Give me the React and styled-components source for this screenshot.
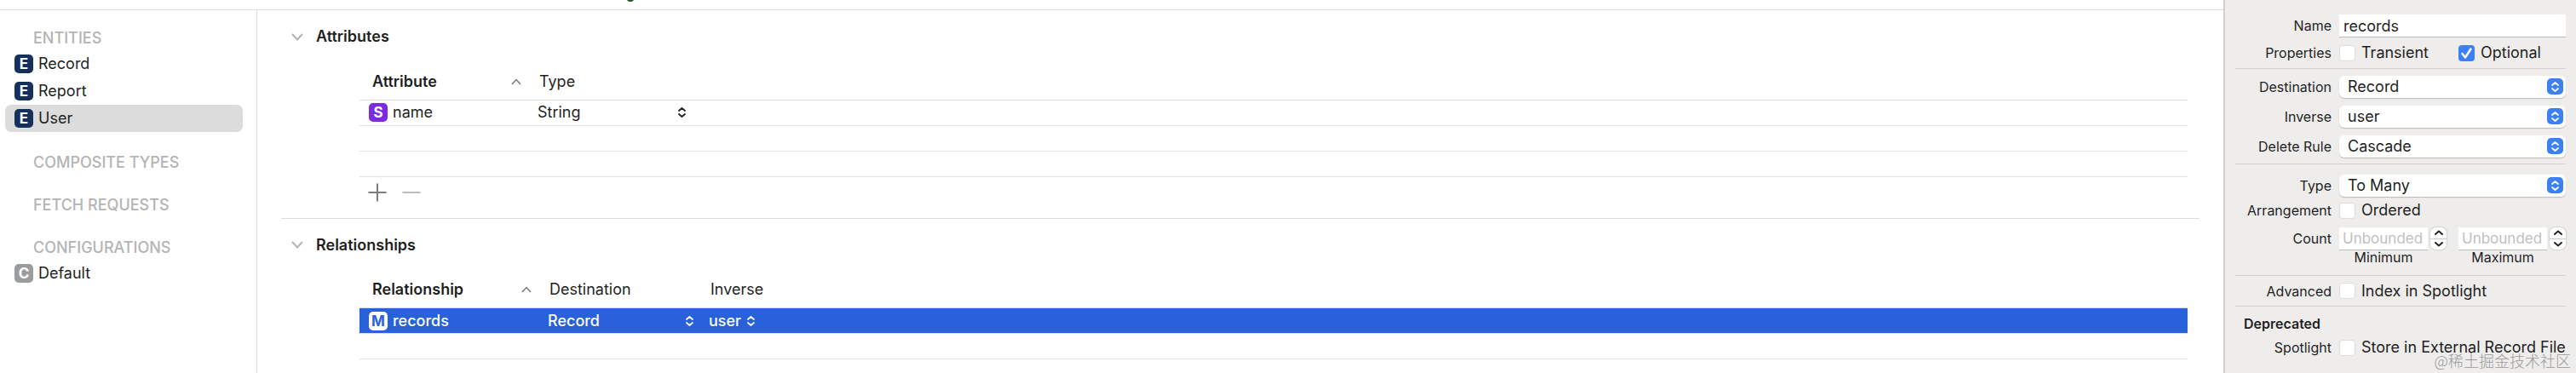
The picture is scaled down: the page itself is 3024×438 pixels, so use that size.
import styled, { createGlobalStyle, css } from "styled-components";

const entities = ["Record", "Report", "User"];

const App = () => {
    return (
        <Page>
            <GlobalStyle />
            <Editor>
                <TopBar>
                    <StatusMark viewBox="0 0 8 2">
                        <path d="M0 0H8C7 1.4 5.6 2 4 2S1 1.4 0 0Z" fill="#245a22" />
                    </StatusMark>
                </TopBar>
                <Panes>
                    <Sidebar>
                        <Group>
                            <GroupTitle>ENTITIES</GroupTitle>
                            {entities.map(name => (
                                <SideItem key={name} $selected={name === "User"}>
                                    <Badge $color="#14305c">E</Badge>
                                    {name}
                                </SideItem>
                            ))}
                        </Group>
                        <Group>
                            <GroupTitle>COMPOSITE TYPES</GroupTitle>
                        </Group>
                        <Group>
                            <GroupTitle>FETCH REQUESTS</GroupTitle>
                        </Group>
                        <Group>
                            <GroupTitle>CONFIGURATIONS</GroupTitle>
                            <SideItem>
                                <Badge $color="#9b9c9d">C</Badge>
                                Default
                            </SideItem>
                        </Group>
                    </Sidebar>
                    <Main>
                        <Section>
                            <SectionTitle>
                                <Disclosure />
                                Attributes
                            </SectionTitle>
                            <Table>
                                <colgroup>
                                    <col width="202" />
                                    <col width="192" />
                                    <col />
                                </colgroup>
                                <thead>
                                    <tr>
                                        <HeadCell $sorted>
                                            <HeadLabel>Attribute <SortArrow /></HeadLabel>
                                        </HeadCell>
                                        <HeadCell>Type</HeadCell>
                                        <HeadCell />
                                    </tr>
                                </thead>
                                <tbody>
                                    <Row>
                                        <Cell>
                                            <NameBox>
                                                <Badge $color="#7d2ae0">S</Badge>
                                                name
                                            </NameBox>
                                        </Cell>
                                        <Cell>
                                            <CellPopup label="Attribute type" value="String" />
                                        </Cell>
                                        <Cell />
                                    </Row>
                                    <Row><Cell /><Cell /><Cell /></Row>
                                    <Row><Cell /><Cell /><Cell /></Row>
                                </tbody>
                            </Table>
                            <TableActions>
                                <IconButton type="button" aria-label="Add attribute">
                                    <svg width="22" height="22" viewBox="0 0 22 22">
                                        <path d="M0.5 11H21.5M11 0.5V21.5" stroke="#7d7d7d" strokeWidth="2" />
                                    </svg>
                                </IconButton>
                                <IconButton type="button" aria-label="Remove attribute">
                                    <svg width="22" height="22" viewBox="0 0 22 22">
                                        <path d="M0.5 11H21.5" stroke="#bdbdbd" strokeWidth="2" />
                                    </svg>
                                </IconButton>
                            </TableActions>
                        </Section>
                        <Section>
                            <SectionTitle>
                                <Disclosure />
                                Relationships
                            </SectionTitle>
                            <Table>
                                <colgroup>
                                    <col width="214" />
                                    <col width="189" />
                                    <col />
                                </colgroup>
                                <thead>
                                    <tr>
                                        <HeadCell $sorted>
                                            <HeadLabel>Relationship <SortArrow /></HeadLabel>
                                        </HeadCell>
                                        <HeadCell>Destination</HeadCell>
                                        <HeadCell>Inverse</HeadCell>
                                    </tr>
                                </thead>
                                <tbody>
                                    <Row $selected>
                                        <Cell>
                                            <NameBox>
                                                <Badge $color="#fff" $text="#2861d9">M</Badge>
                                                records
                                            </NameBox>
                                        </Cell>
                                        <Cell>
                                            <CellPopup label="Destination entity" value="Record" />
                                        </Cell>
                                        <Cell>
                                            <CellPopup label="Inverse relationship" value="user" compact />
                                        </Cell>
                                    </Row>
                                    <Row><Cell /><Cell /><Cell /></Row>
                                </tbody>
                            </Table>
                        </Section>
                    </Main>
                </Panes>
            </Editor>
            <Inspector>
                <Block $top={4}>
                    <Field $height={28}>
                        <FieldLabel htmlFor="name">Name</FieldLabel>
                        <TextInput id="name" defaultValue="records" />
                    </Field>
                    <Field $height={36}>
                        <FieldLabel as="span">Properties</FieldLabel>
                        <Pair>
                            <Check label="Transient" />
                            <Check label="Optional" checked />
                        </Pair>
                    </Field>
                </Block>
                <Block $top={3} $bottom={3}>
                    <PopupField id="destination" label="Destination" value="Record" />
                    <PopupField id="inverse" label="Inverse" value="user" />
                    <PopupField id="rule" label="Delete Rule" value="Cascade" />
                </Block>
                <Block $top={7} $bottom={12}>
                    <PopupField id="type" label="Type" value="To Many" />
                    <Field $height={22}>
                        <FieldLabel as="span">Arrangement</FieldLabel>
                        <Check label="Ordered" />
                    </Field>
                    <CountField>
                        <FieldLabel as="span">Count</FieldLabel>
                        <Pair>
                            <Counter id="min" />
                            <Counter id="max" />
                        </Pair>
                    </CountField>
                    <Field $height={18}>
                        <span />
                        <Pair>
                            <CountLabel htmlFor="min">Minimum</CountLabel>
                            <CountLabel htmlFor="max">Maximum</CountLabel>
                        </Pair>
                    </Field>
                </Block>
                <Block>
                    <Field $height={35}>
                        <FieldLabel as="span">Advanced</FieldLabel>
                        <Check label="Index in Spotlight" />
                    </Field>
                </Block>
                <Block $top={8}>
                    <BlockTitle>Deprecated</BlockTitle>
                    <Field $height={32}>
                        <FieldLabel as="span">Spotlight</FieldLabel>
                        <Check label="Store in External Record File" />
                    </Field>
                </Block>
                <Watermark>@稀土掘金技术社区</Watermark>
            </Inspector>
        </Page>
    );
}

export default App;

const Disclosure = () => (
    <svg width="14" height="9" viewBox="0 0 14 9">
        <path d="M1 1L7 7.5L13 1" fill="none" stroke="#b4b4b4" strokeWidth="2" />
    </svg>
);

const SortArrow = () => (
    <svg width="12" height="8" viewBox="0 0 12 8">
        <path d="M1 7L6 1.5L11 7" fill="none" stroke="#777" strokeWidth="1.5" />
    </svg>
);

const UpDown = () => (
    <svg width="9" height="12" viewBox="0 0 9 12">
        <path d="M1 4L4.5 1L8 4M1 8L4.5 11L8 8" fill="none" stroke="currentColor" strokeWidth="1.8" strokeLinecap="round" strokeLinejoin="round" />
    </svg>
);

const CellPopup = ({ label, value, compact }) => (
    <CellPopupBox $compact={compact}>
        <CellSelect aria-label={label} defaultValue={value}>
            <option>{value}</option>
        </CellSelect>
        <UpDown />
    </CellPopupBox>
);

const PopupField = ({ id, label, value }) => (
    <Field $height={35}>
        <FieldLabel htmlFor={id}>{label}</FieldLabel>
        <PopupBox>
            <PopupSelect id={id} defaultValue={value}>
                <option>{value}</option>
            </PopupSelect>
            <PopupCap>
                <UpDown />
            </PopupCap>
        </PopupBox>
    </Field>
);

const Check = ({ label, checked }) => (
    <CheckLabel>
        <CheckBox type="checkbox" defaultChecked={checked} />
        {checked && (
            <Tick viewBox="0 0 19 19">
                <path d="M4.5 10L8 14.5L14.5 4.5" fill="none" stroke="#fff" strokeWidth="2.5" strokeLinecap="round" strokeLinejoin="round" />
            </Tick>
        )}
        {label}
    </CheckLabel>
);

const Counter = ({ id }) => (
    <CounterBox>
        <CountInput id={id} placeholder="Unbounded" />
        <Stepper>
            <StepButton type="button" aria-label="Increase">
                <svg width="10" height="6" viewBox="0 0 10 6">
                    <path d="M1 5L5 1.5L9 5" fill="none" stroke="#222" strokeWidth="2" strokeLinecap="round" />
                </svg>
            </StepButton>
            <StepButton type="button" aria-label="Decrease">
                <svg width="10" height="6" viewBox="0 0 10 6">
                    <path d="M1 1L5 4.5L9 1" fill="none" stroke="#222" strokeWidth="2" strokeLinecap="round" />
                </svg>
            </StepButton>
        </Stepper>
    </CounterBox>
);

const GlobalStyle = createGlobalStyle`
    * {
        box-sizing: border-box;
    }
    body {
        margin: 0;
        background: #fff;
        color: #1f1f1f;
        font-family: Inter, "Noto Sans CJK SC", sans-serif;
        font-size: 18px;
        line-height: 24px;
    }
    svg {
        display: block;
        flex: none;
    }
    input, select, button {
        margin: 0;
        font: inherit;
        color: inherit;
        border: 0;
        outline: none;
    }
`;

const Page = styled.div`
    display: flex;
    min-height: 100vh;
    overflow: hidden;
`;
const Editor = styled.div`
    flex: 1;
    min-width: 0;
    display: flex;
    flex-direction: column;
`;
const TopBar = styled.header`
    height: 12px;
    padding-left: 736px;
    border-bottom: 1px solid #dedede;
`;
const StatusMark = styled.svg`
    width: 8px;
    height: 2px;
`;
const Panes = styled.div`
    flex: 1;
    display: flex;
`;

const Sidebar = styled.nav`
    width: 302px;
    padding: 19px 16px 0 6px;
    border-right: 1px solid #dcdcdc;
`;
const Group = styled.div`
    margin-bottom: 22px;
`;
const GroupTitle = styled.div`
    padding-left: 33px;
    line-height: 28px;
    font-weight: 500;
    color: #b4b4b4;
`;
const SideItem = styled.div`
    display: flex;
    align-items: center;
    gap: 6px;
    height: 32px;
    padding-left: 11px;
    border-radius: 7px;
    background: ${({ $selected }) => ($selected ? "#dcdcdc" : "transparent")};
`;
const Badge = styled.span`
    flex: none;
    width: 22px;
    height: 22px;
    border-radius: 5px;
    background: ${({ $color }) => $color};
    color: ${({ $text }) => $text || "#fff"};
    font-size: 17px;
    font-weight: 700;
    line-height: 22px;
    text-align: center;
`;

const Main = styled.main`
    flex: 1;
    min-width: 0;
    padding: 0 28px;
`;
const Section = styled.section`
    padding: 19px 14px 19px 12px;
    & + & {
        border-top: 1px solid #dedede;
    }
`;
const SectionTitle = styled.h2`
    display: flex;
    align-items: center;
    gap: 15px;
    margin: 0 0 24px;
    font-size: 18px;
    font-weight: 600;
    line-height: 24px;
`;
const Table = styled.table`
    width: calc(100% - 80px);
    margin-left: 80px;
    table-layout: fixed;
    border-collapse: collapse;
`;
const HeadCell = styled.th`
    height: 38px;
    padding: ${({ $sorted }) => ($sorted ? "0 12px 4px 15px" : "0 9px 4px")};
    text-align: left;
    font-weight: ${({ $sorted }) => ($sorted ? 600 : 400)};
    border-bottom: 1px solid #dedede;
`;
const HeadLabel = styled.div`
    display: flex;
    align-items: center;
    justify-content: space-between;
`;
const Row = styled.tr`
    ${({ $selected }) => $selected && css`
        background: #2861d9;
        color: #fff;
        font-weight: 500;
    `}
`;
const Cell = styled.td`
    height: 30px;
    padding: 0 11px 0 7px;
    border-bottom: 1px solid #e2e2e2;
    &:first-child {
        padding-left: 11px;
    }
`;
const NameBox = styled.div`
    display: flex;
    align-items: center;
    gap: 6px;
`;
const CellPopupBox = styled.div`
    display: flex;
    align-items: center;
    justify-content: ${({ $compact }) => ($compact ? "flex-start" : "space-between")};
    gap: 6px;
`;
const CellSelect = styled.select`
    appearance: none;
    padding: 0;
    background: none;
    font-weight: inherit;
`;
const TableActions = styled.div`
    display: flex;
    gap: 18px;
    padding: 7px 0 0 90px;
`;
const IconButton = styled.button`
    padding: 0;
    background: none;
`;

const Inspector = styled.aside`
    position: relative;
    width: 414px;
    padding: 12px 12px 0 12px;
    border-left: 2px solid #d2d1d0;
    background: #eeedec;
`;
const Block = styled.div`
    padding-top: ${({ $top }) => $top || 0}px;
    padding-bottom: ${({ $bottom }) => $bottom || 0}px;
    & + & {
        border-top: 1px solid #d2d1d0;
    }
`;
const Field = styled.div`
    display: grid;
    grid-template-columns: 113px minmax(0, 1fr);
    column-gap: 9px;
    align-items: center;
    height: ${({ $height }) => $height}px;
`;
const CountField = styled(Field)`
    height: 26px;
    margin-top: 10px;
`;
const FieldLabel = styled.label`
    font-size: 16px;
    text-align: right;
    white-space: nowrap;
`;
const TextInput = styled.input`
    width: 100%;
    height: 26px;
    padding: 0 5px;
    background: #fff;
    box-shadow: 0 1px 0 #bbb;
`;
const Pair = styled.div`
    display: grid;
    grid-template-columns: repeat(2, minmax(0, 1fr));
    column-gap: 14px;
`;
const CheckLabel = styled.label`
    position: relative;
    display: flex;
    align-items: center;
    gap: 7px;
    white-space: nowrap;
`;
const CheckBox = styled.input`
    appearance: none;
    flex: none;
    width: 19px;
    height: 19px;
    border-radius: 4px;
    background: #fff;
    box-shadow: inset 0 0 1px 1px #dcdcdc;
    &:checked {
        background: #3b80f5;
        box-shadow: none;
    }
`;
const Tick = styled.svg`
    position: absolute;
    left: 0;
    width: 19px;
    height: 19px;
    pointer-events: none;
`;
const PopupBox = styled.div`
    display: flex;
    align-items: center;
    height: 26px;
    padding-right: 3px;
    border-radius: 6px;
    background: #fff;
    box-shadow: 0 1px 1px #b9b9b9;
`;
const PopupSelect = styled.select`
    appearance: none;
    flex: 1;
    padding: 0 10px;
    background: none;
`;
const PopupCap = styled.span`
    display: flex;
    align-items: center;
    justify-content: center;
    width: 19px;
    height: 19px;
    border-radius: 5px;
    background: #3b80f5;
    color: #fff;
    pointer-events: none;
`;
const CounterBox = styled.div`
    display: flex;
    gap: 3px;
`;
const CountInput = styled.input`
    flex: 1;
    min-width: 0;
    height: 26px;
    padding: 0 4px;
    background: #fff;
    box-shadow: 0 1px 0 #bbb;
    font-size: 17px;
    &::placeholder {
        color: #bfbfbf;
    }
`;
const Stepper = styled.div`
    display: flex;
    flex-direction: column;
    flex: none;
    width: 19px;
    height: 26px;
    border-radius: 7px;
    background: #fff;
    box-shadow: 0 0 1px 1px #d4d4d4;
`;
const StepButton = styled.button`
    flex: 1;
    display: flex;
    align-items: center;
    justify-content: center;
    padding: 0;
    background: none;
    & + & {
        border-top: 1px solid #ccc;
    }
`;
const CountLabel = styled.label`
    padding-right: 22px;
    font-size: 16px;
    line-height: 18px;
    text-align: center;
`;
const BlockTitle = styled.h3`
    margin: 0;
    padding-left: 10px;
    font-size: 16px;
    font-weight: 600;
    line-height: 24px;
`;
const Watermark = styled.div`
    position: absolute;
    right: 6px;
    bottom: 6px;
    font-family: "Noto Sans CJK SC", sans-serif;
    font-weight: 300;
    color: #9a9a9a;
`;
